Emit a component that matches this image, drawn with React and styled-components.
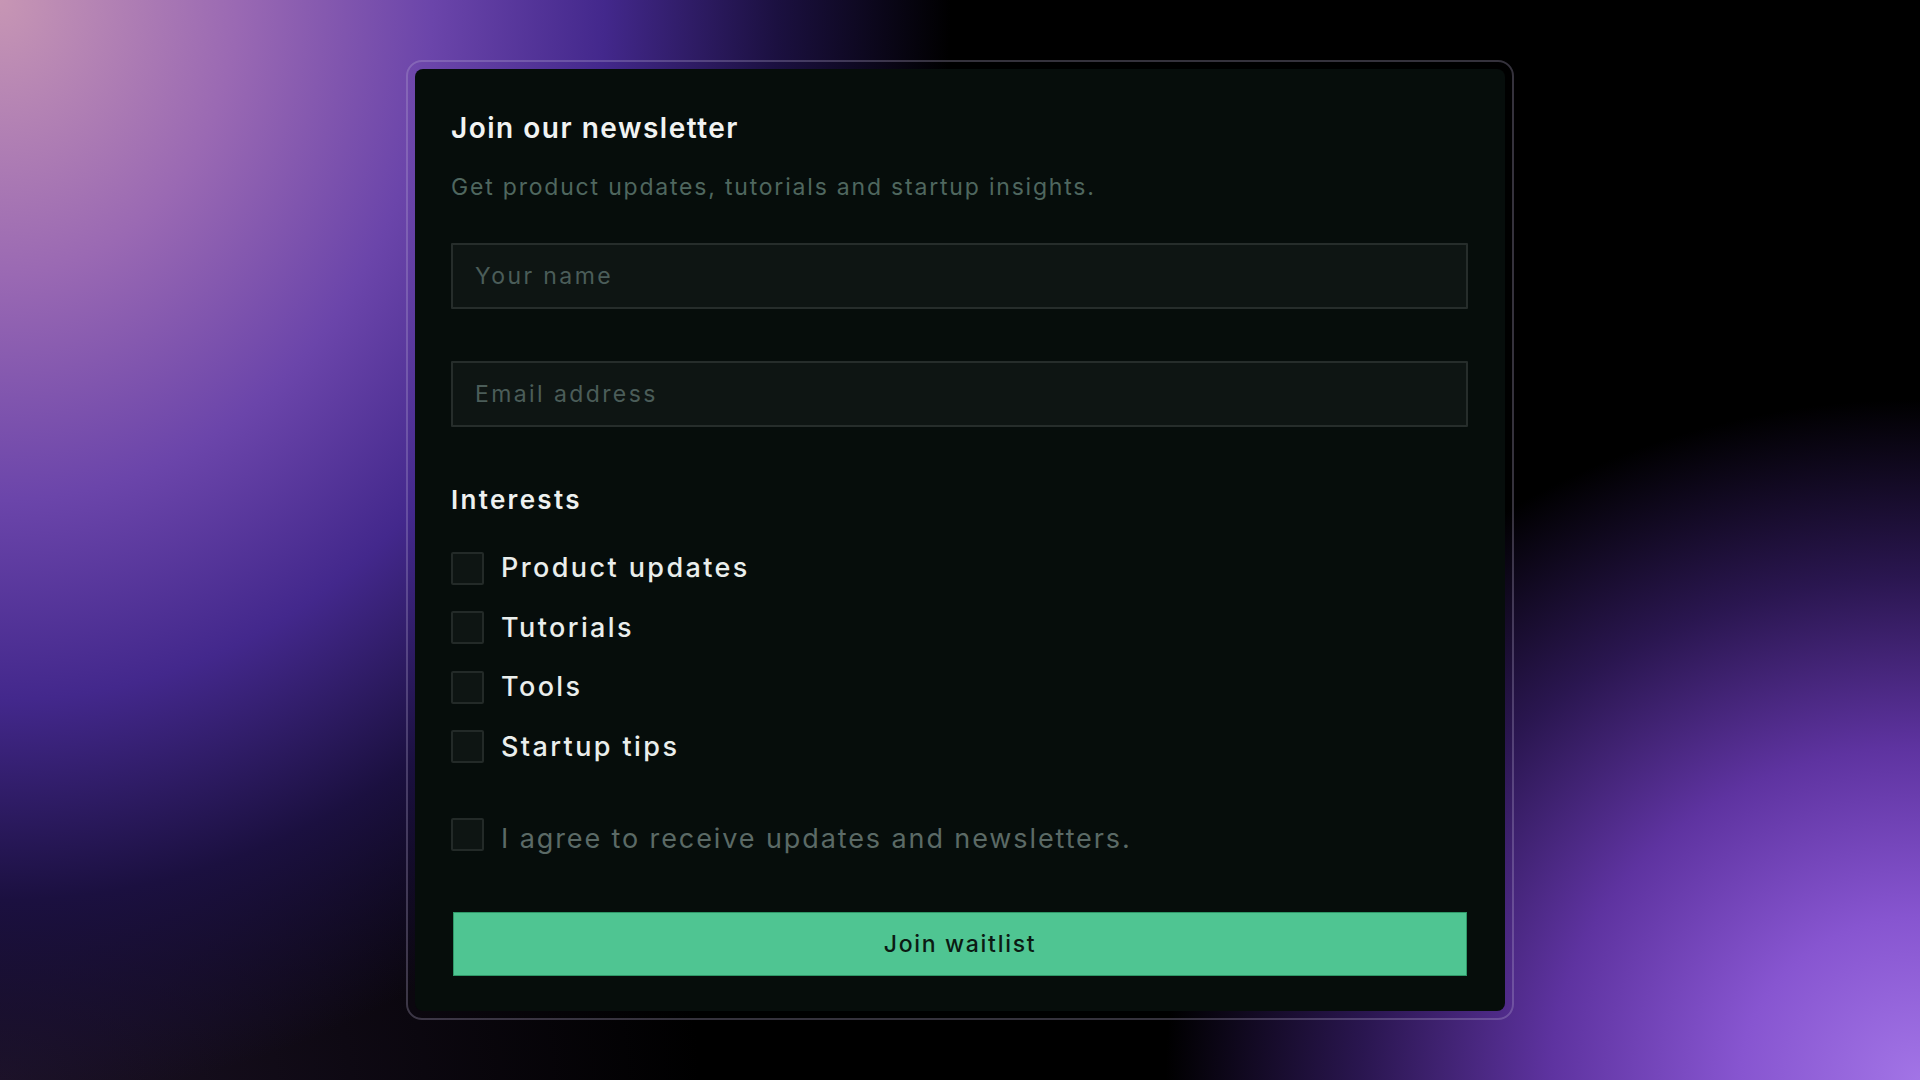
import React from "react";
import styled, { createGlobalStyle } from "styled-components";

const Global = createGlobalStyle`
  * { box-sizing: border-box; }
  html, body { margin: 0; padding: 0; }
  body {
    font-family: Inter, "Open Sans", "Liberation Sans", sans-serif;
    background: #000;
  }
`;

const Page = styled.main`
  min-height: 100vh;
  width: 100%;
  display: flex;
  align-items: center;
  justify-content: center;
  background:
    radial-gradient(ellipse 1080px 1250px at 0% 0%, #c796b4 0%, #9a69b3 22%, #6b45aa 40%, #43288c 56%, #1b1040 72%, rgba(10,5,25,0) 88%),
    radial-gradient(ellipse 820px 740px at 100% 100%, #a274e6 0%, #8755d0 22%, #5e33a0 45%, #2a1650 68%, rgba(15,8,30,0) 92%),
    radial-gradient(ellipse 700px 500px at 0% 100%, #1c1226 0%, rgba(20,10,30,0) 100%),
    #000;
`;

const Frame = styled.div`
  padding: 7px;
  border: 2px solid rgba(190, 180, 215, 0.28);
  border-radius: 16px;
`;

const Card = styled.form`
  width: 1090px;
  background: #060d0b;
  border-radius: 8px;
  padding: 44px 37px 35px 36px;
  display: flex;
  flex-direction: column;
`;

const Title = styled.h1`
  margin: 0;
  font-size: 28px;
  line-height: 30px;
  font-weight: 600;
  letter-spacing: 1.5px;
  color: #f1f3f2;
`;

const Subtitle = styled.p`
  margin: 30px 0 42px;
  font-size: 23px;
  line-height: 28px;
  font-weight: 400;
  letter-spacing: 1.8px;
  color: #4f675f;
`;

const Field = styled.input`
  width: 100%;
  height: 66px;
  margin: 0 0 ${(p) => p.$gap || 0}px;
  padding: 0 22px;
  background: #0e1513;
  border: 2px solid #262d2b;
  border-radius: 1px;
  font-family: inherit;
  font-size: 23px;
  letter-spacing: 2.4px;
  color: #e8ecea;
  outline: none;
  &::placeholder { color: #4b5d59; }
`;

const SectionTitle = styled.h2`
  margin: 59px 0 37px;
  font-size: 26px;
  line-height: 28px;
  font-weight: 600;
  letter-spacing: 2.3px;
  color: #eef1f0;
`;

const Options = styled.div`
  display: flex;
  flex-direction: column;
  gap: 25.5px;
`;

const Row = styled.label`
  display: flex;
  align-items: center;
  gap: 17px;
  height: 34px;
  cursor: pointer;
`;

const Box = styled.input.attrs({ type: "checkbox" })`
  appearance: none;
  margin: 0;
  flex: none;
  width: 33px;
  height: 33px;
  background: #0e1513;
  border: 2px solid #232a28;
  border-radius: 2px;
`;

const Label = styled.span`
  font-size: 27px;
  line-height: 34px;
  letter-spacing: ${(p) => (p.$muted ? 1.9 : 2.4)}px;
  color: ${(p) => (p.$muted ? "#5b6a66" : "#eaeeec")};
  font-weight: ${(p) => (p.$muted ? 400 : 500)};
  padding-top: ${(p) => (p.$muted ? 9 : 0)}px;
`;

const Consent = styled(Row)`
  margin-top: 54px;
`;

const Submit = styled.button`
  margin: 60px 1px 0 2px;
  height: 64px;
  background: #4fc592;
  border: 1px solid #2f9868;
  border-radius: 0;
  font-family: inherit;
  font-size: 23px;
  font-weight: 500;
  letter-spacing: 1.7px;
  color: #0b1a13;
  cursor: pointer;
`;

const interests = ["Product updates", "Tutorials", "Tools", "Startup tips"];

export default function App() {
  return (
    <>
      <Global />
      <Page>
        <Frame>
          <Card onSubmit={(e) => e.preventDefault()}>
            <Title>Join our newsletter</Title>
            <Subtitle>Get product updates, tutorials and startup insights.</Subtitle>
            <Field placeholder="Your name" $gap={52} />
            <Field placeholder="Email address" type="email" />
            <SectionTitle>Interests</SectionTitle>
            <Options>
              {interests.map((i) => (
                <Row key={i}>
                  <Box />
                  <Label>{i}</Label>
                </Row>
              ))}
            </Options>
            <Consent>
              <Box />
              <Label $muted>I agree to receive updates and newsletters.</Label>
            </Consent>
            <Submit type="submit">Join waitlist</Submit>
          </Card>
        </Frame>
      </Page>
    </>
  );
}
